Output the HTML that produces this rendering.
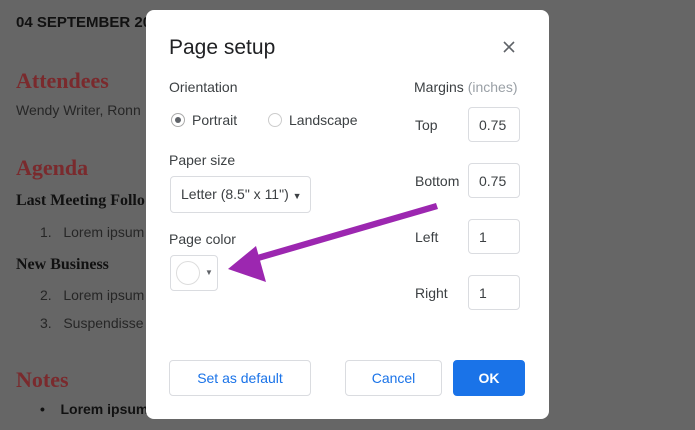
<!DOCTYPE html>
<html><head><style>
html,body{margin:0;width:695px;height:430px;overflow:hidden;background:#666666;font-family:"Liberation Sans",sans-serif;position:relative}
.a{position:absolute;white-space:nowrap}
.s{font-family:"Liberation Serif",serif;font-weight:bold}
.dlg{position:absolute;left:146px;top:10px;width:403px;height:409px;background:#fff;border-radius:8px}
.lbl{font-size:14px;color:#3c4043}
.inp{position:absolute;width:52px;height:33px;border:1px solid #dadce0;border-radius:4px;box-sizing:border-box;font-size:14px;color:#3c4043;padding:9px 0 0 10px}
.btn{position:absolute;height:36px;border:1px solid #dadce0;border-radius:4px;box-sizing:border-box;color:#1a73e8;font-size:14px;text-align:center;line-height:34px}
.rad{position:absolute;width:14px;height:14px;border:1px solid #aaa;border-radius:50%;box-sizing:border-box}
</style></head><body>
<div class="a" style="left:16px;top:14px;font-size:15px;font-weight:bold;color:#111">04 SEPTEMBER 20</div>
<div class="a s" style="left:16px;top:68px;font-size:22px;color:#7a2a2d">Attendees</div>
<div class="a" style="left:16px;top:102px;font-size:14px;color:#262626">Wendy Writer, Ronn</div>
<div class="a s" style="left:16px;top:155px;font-size:22px;color:#7a2a2d">Agenda</div>
<div class="a s" style="left:16px;top:192px;font-size:16px;color:#111">Last Meeting Follo</div>
<div class="a" style="left:40px;top:224px;font-size:14px;color:#262626">1.&nbsp;&nbsp; Lorem ipsum</div>
<div class="a s" style="left:16px;top:256px;font-size:16px;color:#111">New Business</div>
<div class="a" style="left:40px;top:287px;font-size:14px;color:#262626">2.&nbsp;&nbsp; Lorem ipsum</div>
<div class="a" style="left:40px;top:315px;font-size:14px;color:#262626">3.&nbsp;&nbsp; Suspendisse</div>
<div class="a s" style="left:16px;top:367px;font-size:22px;color:#7a2a2d">Notes</div>
<div class="a" style="left:40px;top:401px;font-size:14px;color:#111;font-weight:bold">•&nbsp;&nbsp;&nbsp; Lorem ipsum</div>
<div class="dlg"></div>
<div class="a" style="left:169px;top:36px;font-size:21px;color:#202124">Page setup</div>
<svg class="a" style="left:503px;top:41px" width="12" height="12"><path d="M1 1L11 11M11 1L1 11" stroke="#5f6368" stroke-width="1.6"/></svg>
<div class="a lbl" style="left:169px;top:79px">Orientation</div>
<div class="rad" style="left:171px;top:113px"></div><div class="a" style="left:175px;top:117px;width:6px;height:6px;border-radius:50%;background:#5f6368"></div>
<div class="a lbl" style="left:192px;top:112px">Portrait</div>
<div class="rad" style="left:268px;top:113px;border-color:#ccc"></div>
<div class="a lbl" style="left:289px;top:112px">Landscape</div>
<div class="a lbl" style="left:169px;top:152px">Paper size</div>
<div class="btn" style="left:170px;top:176px;width:141px;height:37px;color:#3c4043;text-align:left;padding-left:10px">Letter (8.5" x 11") <span style="font-size:9px">▼</span></div>
<div class="a lbl" style="left:169px;top:231px">Page color</div>
<div class="btn" style="left:170px;top:255px;width:48px;height:36px"></div>
<div class="a" style="left:176px;top:261px;width:22px;height:22px;border:1px solid #ddd;border-radius:50%"></div>
<div class="a" style="left:205px;top:268px;font-size:8px;color:#5f6368">▼</div>
<div class="a lbl" style="left:414px;top:79px;color:#3c4043">Margins <span style="color:#9aa0a6">(inches)</span></div>
<div class="a lbl" style="left:415px;top:117px">Top</div>
<div class="a lbl" style="left:415px;top:173px">Bottom</div>
<div class="a lbl" style="left:415px;top:229px">Left</div>
<div class="a lbl" style="left:415px;top:285px">Right</div>
<div class="inp" style="left:468px;top:107px;height:35px">0.75</div>
<div class="inp" style="left:468px;top:163px;height:35px">0.75</div>
<div class="inp" style="left:468px;top:219px;height:35px">1</div>
<div class="inp" style="left:468px;top:275px;height:35px">1</div>
<div class="btn" style="left:169px;top:360px;width:142px">Set as default</div>
<div class="btn" style="left:345px;top:360px;width:97px">Cancel</div>
<div class="btn" style="left:453px;top:360px;width:72px;background:#1a73e8;border-color:#1a73e8;color:#fff;font-weight:bold">OK</div>
<svg class="a" style="left:0;top:0" width="695" height="430"><g fill="#9c27b0"><polygon points="436,203 438,209 252,263 250,257"/><polygon points="228,269 256,246 266,282"/></g></svg>
</body></html>
